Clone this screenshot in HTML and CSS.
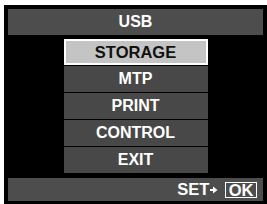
FILE: index.html
```
<!DOCTYPE html>
<html>
<head>
    <link rel="stylesheet" href="styles.css">
</head>
<body>
    <div class="screen">
        <h2 class="title">USB</h2>
        <div class="menu">
            <div class="item selected">STORAGE</div>
            <div class="item">MTP</div>
            <div class="item">PRINT</div>
            <div class="item">CONTROL</div>
            <div class="item">EXIT</div>
        </div>
        <div class="footer">
            <span class="set">SET</span>
            <svg class="arrow" width="8" height="8" viewBox="0 0 8 8">
                <rect x="0" y="3" width="4" height="2" fill="#fff"/>
                <polygon points="3,0.5 7.5,4 3,7.5" fill="#fff"/>
            </svg>
            <span class="ok">OK</span>
        </div>
    </div>
</body>
</html>
```

FILE: styles.css
```
*{
    margin: 0;
    box-sizing: border-box;
}
body {
    background-color: #fff;
    font-family: "Liberation Sans", Arial, sans-serif;
    font-weight: bold;
}
.screen {
    margin-top: 5px;
    margin-left: 4px;
    width: 263px;
    height: 199px;
    background-color: #000;
    padding: 4px 4px 3px 4px;
    display: flex;
    flex-direction: column;
}
.title {
    height: 26px;
    background-color: #4d4d4d;
    color: #fff;
    font-size: 16px;
    text-align: center;
    line-height: 26px;
}
.menu {
    width: 144px;
    margin: 4px auto 0 auto;
    display: flex;
    flex-direction: column;
    gap: 1px;
}
.item {
    height: 26px;
    background-color: #484848;
    color: #fff;
    font-size: 16px;
    text-align: center;
    line-height: 26px;
}
.item.selected {
    height: 26px;
    background-color: #c4c4c4;
    color: #111;
    border: 2px solid #fff;
    line-height: 22px;
    font-size: 16.5px;
}
.footer {
    height: 23px;
    margin-top: 5px;
    background-color: #4d4d4d;
    color: #fff;
    font-size: 16.5px;
    display: flex;
    justify-content: flex-end;
    align-items: center;
    padding-right: 6px;
}
.arrow {
    margin-left: 1px;
    margin-right: 7px;
}
.ok {
    border: 1.5px solid #fff;
    height: 16px;
    line-height: 14px;
    padding: 0 2.5px;
}
```
